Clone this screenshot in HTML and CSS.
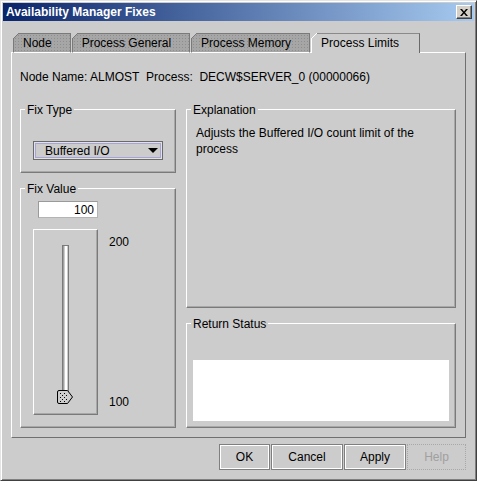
FILE: index.html
```html
<!DOCTYPE html>
<html lang="en">

<head>
    <meta charset="UTF-8">
    <meta name="viewport" content="width=device-width, initial-scale=1.0">
    <title>Availability Manager Fixes</title>
    <link rel="stylesheet" href="styles.css">
</head>

<body>
    <div class="window">
        <div class="title-bar">
            <span class="title-text">Availability Manager Fixes</span>
            <button class="close-btn" aria-label="Close">
                <svg width="8" height="7" viewBox="0 0 8 7">
                    <path d="M0 0h2l2 2.4L6 0h2L5 3.5 8 7H6L4 4.6 2 7H0l3-3.5z" fill="#000" />
                </svg>
            </button>
        </div>

        <div class="window-body">
            <div class="tabs">
                <div class="tab">Node</div>
                <div class="tab">Process General</div>
                <div class="tab">Process Memory</div>
                <div class="tab active">Process Limits</div>
            </div>

            <div class="tab-panel">
                <div class="info-line">Node Name: ALMOST&nbsp; Process:&nbsp; DECW$SERVER_0 (00000066)</div>

                <div class="fix-grid">
                    <div class="fix-col">
                        <div class="group fix-type">
                            <span class="group-title">Fix Type</span>
                            <div class="combo">
                                <span>Buffered I/O</span>
                                <span class="combo-arrow"></span>
                            </div>
                        </div>

                        <div class="group fix-value">
                            <span class="group-title">Fix Value</span>
                            <input class="value-field" type="text" value="100" readonly>
                            <div class="slider-row">
                                <div class="slider-box">
                                    <div class="track">
                                        <svg class="thumb" width="16" height="16" viewBox="0 0 16 16">
                                            <path d="M2 1.5H10.5L15.5 8 10.5 14.5H2Q0.5 14.5 0.5 13V3Q0.5 1.5 2 1.5Z"
                                                fill="#cccccc" stroke="#000" />
                                            <g fill="#000">
                                                <rect x="3" y="4" width="1" height="1" />
                                                <rect x="7" y="4" width="1" height="1" />
                                                <rect x="5" y="6" width="1" height="1" />
                                                <rect x="9" y="6" width="1" height="1" />
                                                <rect x="3" y="8" width="1" height="1" />
                                                <rect x="7" y="8" width="1" height="1" />
                                                <rect x="5" y="10" width="1" height="1" />
                                                <rect x="9" y="10" width="1" height="1" />
                                                <rect x="3" y="12" width="1" height="1" />
                                                <rect x="7" y="12" width="1" height="1" />
                                            </g>
                                        </svg>
                                    </div>
                                </div>
                                <div class="slider-labels">
                                    <span>200</span>
                                    <span>100</span>
                                </div>
                            </div>
                        </div>
                    </div>

                    <div class="fix-col">
                        <div class="group explanation">
                            <span class="group-title">Explanation</span>
                            <p class="explanation-text">Adjusts the Buffered I/O count limit of the process</p>
                        </div>

                        <div class="group return-status">
                            <span class="group-title">Return Status</span>
                            <div class="status-box"></div>
                        </div>
                    </div>
                </div>
            </div>

            <div class="buttons">
                <button class="btn btn-ok">OK</button>
                <button class="btn btn-cancel">Cancel</button>
                <button class="btn btn-apply">Apply</button>
                <button class="btn btn-help" disabled>Help</button>
            </div>
        </div>
    </div>
</body>

</html>
```

FILE: styles.css
```css
:root {
    --face: #cccccc;
    --light: #ffffff;
    --shadow: #7a7a7a;
    --dark: #404040;
    --tab-off: #a6a6a6;
}

* {
    box-sizing: border-box;
}

body {
    margin: 0;
    background: var(--face);
    font-family: 'Liberation Sans', Arial, sans-serif;
    font-size: 12px;
    color: #000;
}

.window {
    width: 477px;
    height: 481px;
    padding: 2px;
    display: flex;
    flex-direction: column;
    background: var(--face);
    border: 1px solid;
    border-color: #e4e4e4 var(--dark) var(--dark) #e4e4e4;
    box-shadow: inset 1px 1px 0 var(--light), inset -1px -1px 0 #808080;
}

.title-bar {
    height: 18px;
    display: flex;
    align-items: center;
    justify-content: space-between;
    padding: 0 2px 0 3px;
    background: linear-gradient(to right, #0a246a, #a6caf0);
}

.title-text {
    color: #fff;
    font-weight: bold;
    font-size: 12px;
}

.close-btn {
    width: 16px;
    height: 14px;
    padding: 0;
    display: flex;
    align-items: center;
    justify-content: center;
    background: #d4d0c8;
    border: 1px solid;
    border-color: var(--light) var(--dark) var(--dark) var(--light);
    box-shadow: inset -1px -1px 0 #808080;
}

.window-body {
    flex: 1;
    display: flex;
    flex-direction: column;
    padding: 12px 8px 8px;
}

/* tabs */
.tabs {
    display: flex;
    gap: 1px;
    height: 20px;
    margin-bottom: -1px;
    padding-left: 2px;
}

.tab {
    position: relative;
    height: 20px;
    padding: 0 18px 0 9px;
    line-height: 18px;
    white-space: nowrap;
    background-color: var(--tab-off);
    background-image: radial-gradient(#8e8e8e 0.6px, transparent 0.8px);
    background-size: 3px 3px;
    border: 1px solid #7a7a7a;
    border-bottom-color: var(--light);
}

.tab::before {
    content: '';
    position: absolute;
    top: -1px;
    left: -1px;
    width: 6px;
    height: 6px;
    background: linear-gradient(135deg, var(--face) 0 calc(50% - 0.7px), #7a7a7a calc(50% - 0.7px) calc(50% + 0.7px), transparent calc(50% + 0.7px));
}

.tab.active {
    z-index: 1;
    padding-right: 20px;
    background: var(--face);
    border-color: #8a8a8a #6a6a6a var(--face) var(--light);
    border-bottom: none;
}

.tab.active::before {
    background: linear-gradient(135deg, var(--face) 0 calc(50% - 0.7px), var(--light) calc(50% - 0.7px) calc(50% + 0.7px), transparent calc(50% + 0.7px));
}

.tab-panel {
    padding: 17px 9px 9px 8px;
    border: 1px solid;
    border-color: var(--light) #707070 #707070 var(--light);
}

.info-line {
    line-height: 14px;
    white-space: nowrap;
    margin-bottom: 25px;
}

.fix-grid {
    display: grid;
    grid-template-columns: 156px 270px;
    gap: 10px;
}

.fix-col {
    display: flex;
    flex-direction: column;
    gap: 15px;
}

/* group boxes */
.group {
    display: flex;
    flex-direction: column;
    border: 1px solid;
    border-color: var(--light) var(--shadow) var(--shadow) var(--light);
    box-shadow: inset -1px -1px 0 #a8a8a8;
}

.group-title {
    align-self: flex-start;
    margin: -7px 0 0 4px;
    padding: 0 2px;
    line-height: 14px;
    background: var(--face);
}

.combo {
    height: 19px;
    margin: 24px 12px 12px;
    display: flex;
    align-items: center;
    justify-content: space-between;
    padding: 0 4px 0 11px;
    border: 1px solid #6a6a6a;
    box-shadow: inset 0 0 0 1px #e2e2e2, inset 0 0 0 2px #a4a4d8;
}

.combo-arrow {
    width: 0;
    height: 0;
    border-left: 5px solid transparent;
    border-right: 5px solid transparent;
    border-top: 5px solid #000;
}

.value-field {
    width: 60px;
    height: 17px;
    margin: 5px 0 11px 17px;
    padding: 0 3px;
    font: inherit;
    line-height: 15px;
    text-align: right;
    background: #fff;
    border: 1px solid;
    border-color: #9a9a9a #b4b4b4 #b4b4b4 #9a9a9a;
    outline: none;
}

.slider-row {
    display: flex;
    gap: 11px;
    margin: 0 12px 12px;
}

.slider-box {
    width: 65px;
    height: 186px;
    padding-top: 15px;
    display: flex;
    justify-content: center;
    border: 1px solid;
    border-color: var(--light) var(--shadow) var(--shadow) var(--light);
    box-shadow: inset -1px -1px 0 #a8a8a8;
}

.track {
    position: relative;
    width: 7px;
    height: 155px;
    border: 1px solid #7a7a7a;
    border-bottom: none;
    background: linear-gradient(to right, #a0a0a0 0 1px, var(--face) 1px 2px, #fff 2px 4px, var(--face) 4px);
}

.thumb {
    position: absolute;
    left: -6px;
    bottom: -5px;
    display: block;
}

.slider-labels {
    display: flex;
    flex-direction: column;
    justify-content: space-between;
    padding: 6px 0;
    line-height: 14px;
}

.explanation {
    flex: 1;
}

.explanation-text {
    margin: 8px 10px 0 9px;
    line-height: 16px;
}

.status-box {
    height: 61px;
    margin: 29px 6px 6px;
    background: #fff;
}

/* dialog buttons */
.buttons {
    display: flex;
    justify-content: flex-end;
    gap: 1px;
    margin-top: 6px;
}

.btn {
    height: 26px;
    padding: 0;
    font: inherit;
    color: #000;
    background: var(--face);
    border: 1px solid #7f7f7f;
    box-shadow: inset 0 0 0 1px var(--light);
}

.btn-ok {
    width: 51px;
}

.btn-cancel {
    width: 72px;
}

.btn-apply {
    width: 62px;
}

.btn-help {
    width: 59px;
    color: #a0a0a0;
    border: 1px dotted #a8a8a8;
    box-shadow: none;
}
```
